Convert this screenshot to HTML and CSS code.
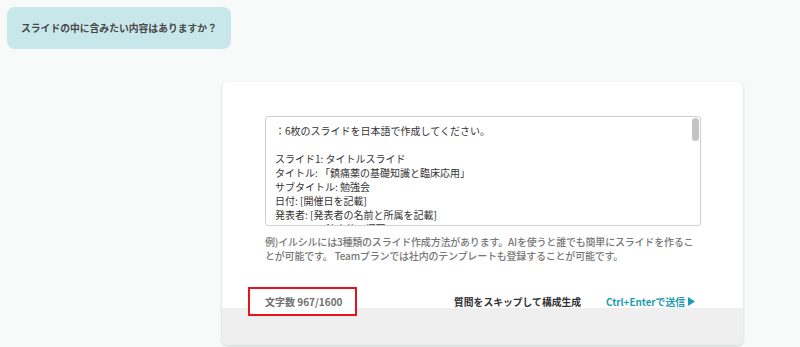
FILE: index.html
```html
<!DOCTYPE html>
<html lang="ja">

<head>
    <meta charset="UTF-8">
    <meta name="viewport" content="width=device-width, initial-scale=1.0">
    <title>スライド作成</title>
    <link rel="stylesheet" href="styles.css">
</head>

<body>

    <!-- Question bubble -->
    <div class="bubble">スライドの中に含みたい内容はありますか？</div>

    <!-- Input card -->
    <div class="card">
        <div class="card-body">
            <div class="prompt-wrap">
                <textarea class="prompt" readonly>：6枚のスライドを日本語で作成してください。

スライド1: タイトルスライド
タイトル: 「鎮痛薬の基礎知識と臨床応用」
サブタイトル: 勉強会
日付: [開催日を記載]
発表者: [発表者の名前と所属を記載]
スライド2: 鎮痛薬の概要
目的: 鎮痛薬の種類と作用機序を理解する
内容: 非オピオイド系、オピオイド系、鎮痛補助薬</textarea>
                <!-- Scrollbar thumb -->
                <div class="thumb"></div>
            </div>
            <p class="hint">例)イルシルには3種類のスライド作成方法があります。AIを使うと誰でも簡単にスライドを作ることが可能です。 Teamプランでは社内のテンプレートも登録することが可能です。</p>
        </div>

        <div class="footer">
            <div class="count">文字数 967/1600</div>
            <div class="actions">
                <span class="skip">質問をスキップして構成生成</span>
                <span class="send">Ctrl+Enterで送信
                    <svg width="7" height="9" viewBox="0 0 7 9"><path d="M0 0 L7 4.5 L0 9 Z" fill="#1d9db2"/></svg>
                </span>
            </div>
        </div>
        <div class="bottom-bar"></div>
    </div>

</body>

</html>
```

FILE: styles.css
```css
html, body {
    margin: 0;
    padding: 0;
}

body {
    background-color: #f8f9f9;
    padding: 7px;
    font-family: "Noto Sans CJK JP", "Noto Sans", sans-serif;
    height: 333px;
    overflow: hidden;
}

/* Question bubble */
.bubble {
    width: 210px;
    height: 42px;
    padding-left: 14px;
    display: flex;
    align-items: center;
    background-color: #c8e7ea;
    border-radius: 8px;
    color: #484848;
    font-size: 9.8px;
    font-weight: bold;
}

/* Card */
.card {
    margin-left: 215px;
    margin-top: 33px;
    width: 521px;
    height: 263px;
    background-color: #fff;
    border-radius: 6px;
    box-shadow: 0 1px 3px rgba(0, 0, 0, 0.18);
    overflow: hidden;
    display: flex;
    flex-direction: column;
}

.card-body {
    padding: 34px 42px 0 43px;
}

.prompt-wrap {
    position: relative;
    width: 436px;
    height: 110px;
}

.prompt {
    display: block;
    box-sizing: border-box;
    width: 100%;
    height: 100%;
    margin: 0;
    padding: 7px 9px;
    border: 1px solid #cfcfcf;
    border-radius: 3px;
    resize: none;
    outline: none;
    font-family: "Noto Sans CJK JP", "Noto Sans", sans-serif;
    font-size: 10px;
    line-height: 14px;
    color: #333;
    overflow: hidden;
}

.thumb {
    position: absolute;
    top: 2px;
    right: 2px;
    width: 7px;
    height: 23px;
    background-color: #c3c3c3;
    border-radius: 4px;
}

.hint {
    margin: 9px 0 0;
    font-size: 10px;
    line-height: 14px;
    letter-spacing: -0.2px;
    color: #777;
    font-weight: 500;
}

/* Footer */
.footer {
    display: flex;
    align-items: center;
    justify-content: space-between;
    height: 29px;
    margin-top: 24px;
    padding: 0 48px 0 26px;
}

.count {
    position: relative;
    z-index: 1;
    box-sizing: border-box;
    height: 29px;
    padding: 0 13px 0 15px;
    display: flex;
    align-items: center;
    background-color: #fff;
    border: 2px solid #e8141b;
    color: #707070;
    font-size: 10px;
    font-weight: bold;
}

.actions {
    display: flex;
    align-items: center;
    gap: 25px;
}

.skip {
    color: #333;
    font-size: 9.8px;
    font-weight: bold;
}

.send {
    display: flex;
    align-items: center;
    gap: 3px;
    color: #1d9db2;
    font-size: 9.8px;
    font-weight: bold;
}

.bottom-bar {
    margin-top: -8px;
    flex: 1;
    background-color: #efefef;
}
```
